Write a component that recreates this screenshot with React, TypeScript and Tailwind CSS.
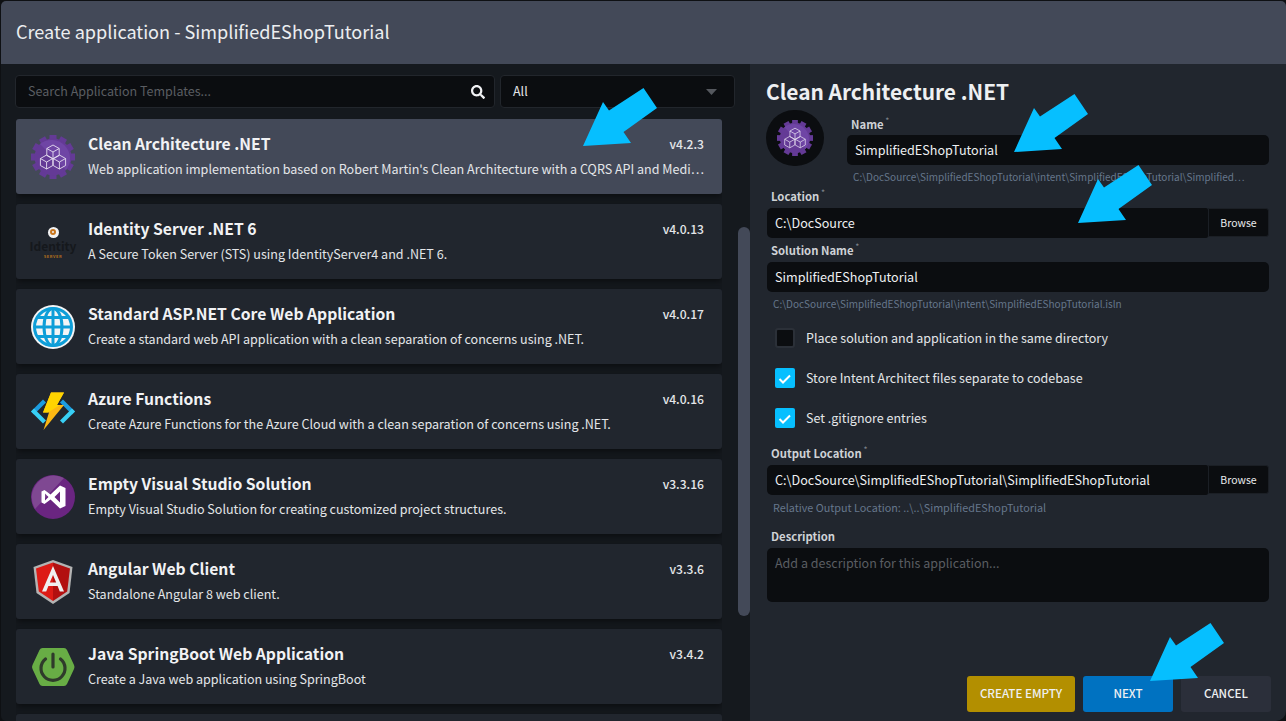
import type { ReactNode } from 'react';
import { FaSearch } from 'react-icons/fa';

const FONT = "font-['Noto_Sans_CJK_SC','Noto_Sans',sans-serif]";

function Cube({ x, y }: { x: number; y: number }) {
  return (
    <path
      transform={`translate(${x} ${y})`}
      d="M0 -7 L6.2 -3.5 L6.2 3.5 L0 7 L-6.2 3.5 L-6.2 -3.5 Z M-6.2 -3.5 L0 0 L6.2 -3.5 M0 0 L0 7"
      fill="none"
      stroke="#e6dff0"
      strokeWidth="0.9"
      strokeLinejoin="round"
    />
  );
}

function GearIcon({ size = 44 }: { size?: number }) {
  const teeth = [0, 30, 60, 90, 120, 150, 180, 210, 240, 270, 300, 330];
  return (
    <svg width={size} height={size} viewBox="0 0 44 44">
      {teeth.map((a) => (
        <rect key={a} x="18.5" y="0" width="7" height="6" fill="#643a96" transform={`rotate(${a} 22 22)`} />
      ))}
      <circle cx="22" cy="22" r="18.5" fill="#643a96" />
      <path d="M9 9 L35 35 A18.5 18.5 0 0 0 9 9 Z" fill="#6f45a5" />
      <Cube x={22} y={17} />
      <Cube x={15.6} y={27} />
      <Cube x={28.4} y={27} />
    </svg>
  );
}

function IdentityIcon() {
  return (
    <div className="w-11 h-11 flex flex-col items-center pt-[7px]">
      <div className="w-[11px] h-[11px] shrink-0 rounded-full bg-[#f2f2f2] flex items-center justify-center">
        <div className="w-[6px] h-[6px] rounded-full border-2 border-[#c9761d]" />
      </div>
      <div className="text-[12px] leading-[12px] mt-[2px] font-bold text-[#15181c]">Identity</div>
      <div className="text-[4px] leading-[5px] mt-[2px] font-bold text-[#b5701d] tracking-[0.5px]">SERVER</div>
    </div>
  );
}

function GlobeIcon() {
  return (
    <svg width="44" height="44" viewBox="0 0 44 44">
      <circle cx="22" cy="22" r="22" fill="#f4f5f6" />
      <circle cx="22" cy="22" r="18.5" fill="#f4f5f6" stroke="#0e9ed8" strokeWidth="3" />
      <ellipse cx="22" cy="22" rx="9" ry="18.5" fill="none" stroke="#0e9ed8" strokeWidth="3" />
      <path d="M22 3.5 V40.5 M3.5 22 H40.5 M7 12.5 H37 M7 31.5 H37" fill="none" stroke="#0e9ed8" strokeWidth="3" />
    </svg>
  );
}

function AzureIcon() {
  return (
    <svg width="44" height="44" viewBox="0 0 44 44">
      <path d="M12 9.5 L0 21.5 L3 24.5 L15 12.5 Z" fill="#1c9ce0" />
      <path d="M0 21.5 L12 33.5 L15 30.5 L3 18.5 Z" fill="#38d0f5" />
      <path d="M32 9.5 L44 21.5 L41 24.5 L29 12.5 Z" fill="#1c9ce0" />
      <path d="M44 21.5 L32 33.5 L29 30.5 L41 18.5 Z" fill="#38d0f5" />
      <path d="M20 2.5 H33 L26 15 H33 L12.5 40 L18 22.5 H12 Z" fill="#fcb813" />
      <path d="M20 2.5 H33 L26 15 H29 L17 22.5 H12 Z" fill="#ffd400" />
    </svg>
  );
}

function VsIcon() {
  return (
    <svg width="44" height="44" viewBox="0 0 44 44">
      <circle cx="22" cy="22" r="22" fill="#6a2581" />
      <path d="M4 34 A22 22 0 0 1 33 3 Z" fill="#7f4892" />
      <path
        d="M29 10.5 L34.5 13 V31 L29 33.5 L19.5 24.5 L13.5 29 L10.5 27.5 V16.5 L13.5 15 L19.5 19.5 Z M14 18.5 V25.5 L17.5 22 Z M29 16.5 L23.5 22 L29 27.5 Z"
        fill="#fff"
        fillRule="evenodd"
      />
    </svg>
  );
}

function AngularIcon() {
  return (
    <svg width="44" height="44" viewBox="0 0 44 44">
      <path d="M22 0 L41.5 7 L38.5 33 L22 44 L5.5 33 L2.5 7 Z" fill="#b3b3b3" />
      <path d="M22 2.5 L5 8.5 L7.8 31.5 L22 41 Z" fill="#dd1b16" />
      <path d="M22 2.5 L39 8.5 L36.2 31.5 L22 41 Z" fill="#b21010" />
      <path
        d="M22 6 L11 31.5 H15.2 L17.4 26 H26.6 L28.8 31.5 H33 Z M22 15 L25.2 22.5 H18.8 Z"
        fill="#f0f0f0"
        fillRule="evenodd"
      />
    </svg>
  );
}

function SpringIcon() {
  return (
    <svg width="44" height="44" viewBox="0 0 44 44">
      <path d="M11.5 3 H33 Q35 3 36 5 L43 20 Q44 22 43 24 L36 39 Q35 41 33 41 H11.5 Q9.5 41 8.5 39 L1.5 24 Q0.5 22 1.5 20 L8.5 5 Q9.5 3 11.5 3 Z" fill="#68ad45" />
      <path d="M14.5 14 A12 12 0 1 0 29.5 14" fill="none" stroke="#2f3a2b" strokeWidth="3.2" strokeLinecap="round" />
      <path d="M22 9 V22" fill="none" stroke="#2f3a2b" strokeWidth="3.2" strokeLinecap="round" />
    </svg>
  );
}

const TEMPLATES: { name: string; desc: string; version: string; icon: ReactNode; active?: boolean }[] = [
  {
    name: 'Clean Architecture .NET',
    desc: "Web application implementation based on Robert Martin's Clean Architecture with a CQRS API and Medi…",
    version: 'v4.2.3',
    icon: <GearIcon />,
    active: true,
  },
  {
    name: 'Identity Server .NET 6',
    desc: 'A Secure Token Server (STS) using IdentityServer4 and .NET 6.',
    version: 'v4.0.13',
    icon: <IdentityIcon />,
  },
  {
    name: 'Standard ASP.NET Core Web Application',
    desc: 'Create a standard web API application with a clean separation of concerns using .NET.',
    version: 'v4.0.17',
    icon: <GlobeIcon />,
  },
  {
    name: 'Azure Functions',
    desc: 'Create Azure Functions for the Azure Cloud with a clean separation of concerns using .NET.',
    version: 'v4.0.16',
    icon: <AzureIcon />,
  },
  {
    name: 'Empty Visual Studio Solution',
    desc: 'Empty Visual Studio Solution for creating customized project structures.',
    version: 'v3.3.16',
    icon: <VsIcon />,
  },
  {
    name: 'Angular Web Client',
    desc: 'Standalone Angular 8 web client.',
    version: 'v3.3.6',
    icon: <AngularIcon />,
  },
  {
    name: 'Java SpringBoot Web Application',
    desc: 'Create a Java web application using SpringBoot',
    version: 'v3.4.2',
    icon: <SpringIcon />,
  },
  { name: '', desc: '', version: '', icon: null },
];

function TemplateCard({ name, desc, version, icon, active }: (typeof TEMPLATES)[number]) {
  return (
    <div
      className={`h-[75px] shrink-0 rounded-[3px] flex items-center pl-[15px] pr-[18px] shadow-[0_3px_6px_rgba(0,0,0,0.45)] ${
        active ? 'bg-[#434958]' : 'bg-[#21262e]'
      }`}
    >
      <div className="w-11 h-11 shrink-0">{icon}</div>
      <div className="ml-[13px] flex-1 min-w-0 -mt-[1px]">
        <div className="flex items-center justify-between h-[26px]">
          <span className="text-[15.7px] font-semibold text-[#f1f2f4]">{name}</span>
          <span className="text-[12.1px] font-medium text-[#e4e6e9]">{version}</span>
        </div>
        <div className="text-[12.55px] leading-[24px] text-[#e4e6e9] whitespace-nowrap">{desc}</div>
      </div>
    </div>
  );
}

function Arrow({ className }: { className: string }) {
  return (
    <svg className={`absolute ${className}`} width="76" height="60" viewBox="0 0 76 60">
      <polygon points="0,59 20,15 26,23.5 60.5,1 74,21 40.5,45 48,56" fill="#06bfff" />
    </svg>
  );
}

function Label({ children, required = true }: { children: ReactNode; required?: boolean }) {
  return (
    <div className="h-[14px] flex items-center text-[11.3px] font-bold text-[#cfd2d6]">
      {children}
      {required && <span className="text-[7px] text-[#7b8088] ml-[2px] -mt-[8px]">*</span>}
    </div>
  );
}

function Field({ value, browse }: { value: string; browse?: boolean }) {
  return (
    <div className="flex h-[30px]">
      <div
        className={`flex-1 bg-[#0b0d10] flex items-center pl-2 text-[12.6px] text-[#eef0f2] ${
          browse ? 'rounded-l-[5px] rounded-r-[2px]' : 'rounded-[5px]'
        }`}
      >
        {value}
      </div>
      {browse && (
        <div className="w-[61px] h-[29px] bg-[#0b0d10] border border-[#1b1f25] rounded-r-[3px] flex items-center justify-center text-[10.5px] text-[#e8eaec]">
          Browse
        </div>
      )}
    </div>
  );
}

function Hint({ children, className = '' }: { children: ReactNode; className?: string }) {
  return <div className={`h-[16px] flex items-center whitespace-nowrap text-[#66778c] ${className}`}>{children}</div>;
}

function Check({ label, checked, className = '' }: { label: string; checked?: boolean; className?: string }) {
  return (
    <div className={`flex items-center h-5 ml-2 ${className}`}>
      {checked ? (
        <div className="w-5 h-5 bg-[#06bfff] rounded-[2px] flex items-center justify-center">
          <svg width="20" height="20" viewBox="0 0 20 20">
            <path d="M4.5 11 L8 14.5 L15 7.5" fill="none" stroke="#fff" strokeWidth="2" />
          </svg>
        </div>
      ) : (
        <div className="w-5 h-5 bg-[#0b0d10] border-2 border-[#2b3038] rounded-[3px]" />
      )}
      <span className="ml-[11px] text-[12.5px] text-[#e4e6e9]">{label}</span>
    </div>
  );
}

export default function App() {
  return (
    <div className={`${FONT} relative w-[1286px] h-[721px] overflow-hidden bg-[#0e1013] pt-px`}>
      <div className="h-full flex flex-col rounded-[5px] overflow-hidden ml-px">
        <div className="h-[63px] shrink-0 bg-[#434958] flex items-center pl-[15px] pb-[1px] text-[18.1px] text-[#eceef0]">
          Create application - SimplifiedEShopTutorial
        </div>

        <div className="flex-1 flex min-h-0">
          <div className="w-[749px] shrink-0 bg-[#15191e] pl-[14px] flex flex-col overflow-hidden">
            <div className="flex gap-[5px] mt-[11px] h-[33px] shrink-0 w-[720px]">
              <div className="w-[480px] bg-[#0b0d10] border border-[#22262c] rounded-[4px] flex items-center pl-3 pr-[9px] justify-between">
                <span className="text-[12.5px] text-[#5a5d62]">Search Application Templates...</span>
                <FaSearch className="text-[#f1f2f4] text-[14px]" />
              </div>
              <div className="flex-1 bg-[#0b0d10] border border-[#22262c] rounded-[4px] flex items-center pl-3 pr-[17px] justify-between">
                <span className="text-[12.5px] text-[#e4e6e9]">All</span>
                <svg width="11" height="6" viewBox="0 0 11 6">
                  <polygon points="0,0 11,0 5.5,6" fill="#55585e" />
                </svg>
              </div>
            </div>

            <div className="flex mt-[11px] flex-1 min-h-0">
              <div className="w-[706px] shrink-0 ml-px flex flex-col gap-[10px] overflow-hidden pb-2">
                {TEMPLATES.map((t, i) => (
                  <TemplateCard key={i} {...t} />
                ))}
              </div>
              <div className="w-3 h-[389px] mt-[108px] ml-4 rounded-full bg-[#434958]" />
            </div>
          </div>

          <div className="flex-1 bg-[#21262e] pl-[17px] pr-[17px] flex flex-col rounded-br-[10px]">
            <div className="h-[30px] mt-[13px] -ml-[1px] flex items-center text-[20.9px] font-semibold text-[#eef0f2]">
              Clean Architecture .NET
            </div>

            <div className="flex mt-[3px] h-[74px]">
              <div className="w-[58px] h-[56px] -ml-[1px] rounded-full bg-[#0b0d10] flex items-center justify-center">
                <GearIcon size={36} />
              </div>
              <div className="ml-[23px] flex-1 min-w-0 pt-[7px]">
                <div className="ml-[4px]">
                  <Label>Name</Label>
                </div>
                <div className="mt-[4px]">
                  <Field value="SimplifiedEShopTutorial" />
                </div>
                <Hint className="mt-[3px] ml-[6px] text-[10px]">
                  C:\DocSource\SimplifiedEShopTutorial\intent\SimplifiedEShopTutorial\Simplified…
                </Hint>
              </div>
            </div>

            <div className="mt-[5px] ml-[4px]">
              <Label>Location</Label>
            </div>
            <div className="mt-[5px]">
              <Field value="C:\DocSource" browse />
            </div>
            <div className="mt-[5px] ml-[4px]">
              <Label>Solution Name</Label>
            </div>
            <div className="mt-[5px]">
              <Field value="SimplifiedEShopTutorial" />
            </div>
            <Hint className="mt-[3px] ml-[6px] text-[10px]">
              C:\DocSource\SimplifiedEShopTutorial\intent\SimplifiedEShopTutorial.isln
            </Hint>

            <Check className="mt-[17px]" label="Place solution and application in the same directory" />
            <Check className="mt-5" checked label="Store Intent Architect files separate to codebase" />
            <Check className="mt-5" checked label="Set .gitignore entries" />

            <div className="mt-[18px] ml-[4px]">
              <Label>Output Location</Label>
            </div>
            <div className="mt-[5px]">
              <Field value="C:\DocSource\SimplifiedEShopTutorial\SimplifiedEShopTutorial" browse />
            </div>
            <Hint className="mt-[4px] ml-[6px] text-[10.8px]">Relative Output Location: ..\..\SimplifiedEShopTutorial</Hint>

            <div className="mt-[14px] ml-[4px]">
              <Label required={false}>Description</Label>
            </div>
            <div className="mt-[5px] h-[54px] bg-[#0b0d10] rounded-[5px] pl-2 pt-[6px] text-[12.5px] text-[#5a5d62]">
              Add a description for this application...
            </div>

            <div className="mt-auto mb-[9px] -mr-[2px] flex justify-end gap-2 text-[11.6px] font-medium text-[#eef0f2]">
              <div className="w-[108px] h-9 bg-[#b38f00] rounded-[3px] flex items-center justify-center">CREATE EMPTY</div>
              <div className="w-[90px] h-9 bg-[#0072c1] rounded-[3px] flex items-center justify-center">NEXT</div>
              <div className="w-[90px] h-9 bg-[#2b2f3a] rounded-[3px] flex items-center justify-center">CANCEL</div>
            </div>
          </div>
        </div>
      </div>

      <Arrow className="left-[583px] top-[87px]" />
      <Arrow className="left-[1014px] top-[93px]" />
      <Arrow className="left-[1078px] top-[164px]" />
      <Arrow className="left-[1150px] top-[622px]" />
    </div>
  );
}
